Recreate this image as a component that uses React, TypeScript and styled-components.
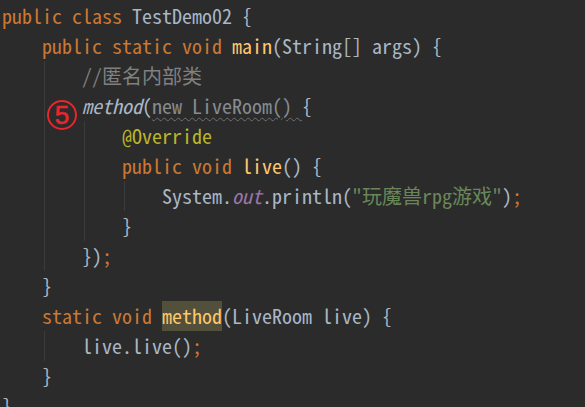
import React from "react";
import styled, { createGlobalStyle, css } from "styled-components";

const GlobalStyle = createGlobalStyle`
  html, body {
    margin: 0;
    padding: 0;
    background: #2b2b2b;
    overflow: hidden;
  }
`;

type Kind = "plain" | "kw" | "decl" | "comment" | "call" | "weak" | "anno" | "field" | "str" | "semi" | "hl";

const colors: Record<Kind, string> = {
  plain: "#a9b7c6",
  kw: "#cc7832",
  decl: "#ffc66d",
  comment: "#808080",
  call: "#a9b7c6",
  weak: "#878b8f",
  anno: "#bbb529",
  field: "#9876aa",
  str: "#6a8759",
  semi: "#cc7832",
  hl: "#ffc66d",
};

const Editor = styled.div`
  width: 585px;
  height: 407px;
  box-sizing: border-box;
  padding: 1px 0 0 2px;
  background: #2b2b2b;
  font-family: "Noto Sans Mono CJK SC", "Liberation Mono", monospace;
  font-size: 20px;
  line-height: 30px;
  color: #a9b7c6;
  white-space: pre;
  overflow: hidden;
`;

const Line = styled.div`
  position: relative;
  display: flex;
  height: 30px;
`;

const Indent = styled.span<{ $guide: boolean }>`
  flex: none;
  width: 40px;
  height: 30px;
  ${(p) =>
    p.$guide &&
    css`
      background: linear-gradient(#3b3b3b, #3b3b3b) no-repeat 2px 0 / 1px 100%;
    `}
`;

const Tok = styled.span<{ $kind: Kind }>`
  color: ${(p) => colors[p.$kind]};
  ${(p) =>
    (p.$kind === "call" || p.$kind === "field") &&
    css`
      font-style: italic;
    `}
  ${(p) =>
    p.$kind === "weak" &&
    css`
      text-decoration: underline wavy #6f6f6f;
      text-decoration-thickness: 1px;
      text-underline-offset: 3px;
    `}
  ${(p) =>
    p.$kind === "hl" &&
    css`
      display: inline-block;
      height: 30px;
      background: #52503a;
    `}
`;

const Badge = styled.span`
  position: absolute;
  left: 45px;
  top: 9px;
  width: 26px;
  height: 26px;
  border: 2px solid #e8262b;
  border-radius: 50%;
  display: flex;
  align-items: center;
  justify-content: center;
  color: #e8262b;
  font-family: "Liberation Sans", Arial, sans-serif;
  font-size: 26px;
  line-height: 1;
  -webkit-text-stroke: 0.6px #e8262b;
`;

type Tk = [Kind, string];
type LineData = { indent: number; tokens: Tk[]; badge?: string };

const lines: LineData[] = [
  { indent: 0, tokens: [["kw", "public class "], ["plain", "TestDemo02 {"]] },
  { indent: 1, tokens: [["kw", "public static void "], ["decl", "main"], ["plain", "(String[] args) {"]] },
  { indent: 2, tokens: [["comment", "//匿名内部类"]] },
  {
    indent: 2,
    badge: "5",
    tokens: [["call", "method"], ["plain", "("], ["weak", "new LiveRoom() "], ["plain", "{"]],
  },
  { indent: 3, tokens: [["anno", "@Override"]] },
  { indent: 3, tokens: [["kw", "public void "], ["decl", "live"], ["plain", "() {"]] },
  {
    indent: 4,
    tokens: [
      ["plain", "System."],
      ["field", "out"],
      ["plain", ".println("],
      ["str", "\"玩魔兽rpg游戏\""],
      ["plain", ")"],
      ["semi", ";"],
    ],
  },
  { indent: 3, tokens: [["plain", "}"]] },
  { indent: 2, tokens: [["plain", "})"], ["semi", ";"]] },
  { indent: 1, tokens: [["plain", "}"]] },
  { indent: 1, tokens: [["kw", "static void "], ["hl", "method"], ["plain", "(LiveRoom live) {"]] },
  { indent: 2, tokens: [["plain", "live.live()"], ["semi", ";"]] },
  { indent: 1, tokens: [["plain", "}"]] },
  { indent: 0, tokens: [["plain", "}"]] },
];

export default function App() {
  return (
    <>
      <GlobalStyle />
      <Editor>
        {lines.map((l, i) => (
          <Line key={i}>
            {Array.from({ length: l.indent }).map((_, k) => (
              <Indent key={k} $guide={k >= 1} />
            ))}
            <span>
              {l.tokens.map(([kind, text], j) => (
                <Tok key={j} $kind={kind}>
                  {text}
                </Tok>
              ))}
            </span>
            {l.badge && <Badge>{l.badge}</Badge>}
          </Line>
        ))}
      </Editor>
    </>
  );
}
